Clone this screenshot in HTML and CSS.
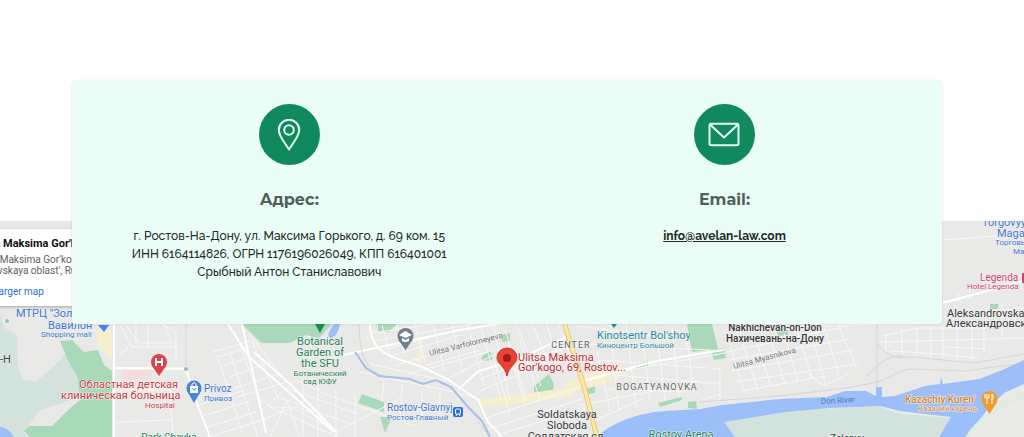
FILE: index.html
```
<!DOCTYPE html>
<html lang="ru">
<head>
<meta charset="utf-8">
<meta name="viewport" content="width=device-width, initial-scale=1">
<title>Контакты</title>
<link rel="stylesheet" href="styles.css">
</head>
<body>
<main class="page">
  <section class="contacts">
    <article class="contact">
      <span class="badge">
        <svg class="icon" viewBox="0 0 32 32" aria-hidden="true"><path d="M16 30.500C12.500 24.500 5.800 17.500 5.800 11A10.200 10.200 0 0 1 26.200 11C26.200 17.500 19.500 24.500 16 30.500Z"/><circle cx="16" cy="11" r="4.800"/></svg>
      </span>
      <h2 class="title">Адрес:</h2>
      <p class="text">г. Ростов-На-Дону, ул. Максима Горького, д. 69 ком. 15<br>ИНН 6164114826, ОГРН 1176196026049, КПП 616401001<br>Срыбный Антон Станиславович</p>
    </article>
    <article class="contact">
      <span class="badge">
        <svg class="icon" viewBox="0 0 32 32" aria-hidden="true"><rect x="1.500" y="4.800" width="29" height="21.500" rx="2"/><path d="M2 5.500L16 18.500L30 5.500"/></svg>
      </span>
      <h2 class="title">Email:</h2>
      <p class="text"><a class="mail" href="mailto:info@avelan-law.com">info@avelan-law.com</a></p>
    </article>
  </section>

  <section class="map" aria-label="Карта">
    <svg class="canvas" viewBox="0 221 1024 216" preserveAspectRatio="xMidYMin slice">
      <rect class="land" y="221" width="1024" height="216"/>

      <g class="marsh">
        <path d="M0 314L5 328L17 336L18 366L23 380L35 382L48 372L62 358L70 347L82 380L80 397L40 410L24 432L28 437H0Z"/>
        <path d="M722 421L790 411L878 406L900 414L951 418L938 437H735Z"/>
        <path d="M1024 398C1000 408 975 420 967 437H1024Z" fill="#e9e9e8"/>
      </g>
      <g class="park">
        <path d="M60 341L72 340L84 352L98 350L104 365L112 371V437H30L24 431L29 426L52 426L68 410L80 400L78 378L68 360Z"/>
        <path d="M242 324H332L319 338L306 335L290 343L261 343Z"/>
        <path d="M362 394L384 402V412L358 403ZM380 417L392 417L385 433ZM378 324H397L389 332H378ZM482 356L492 350L494 359L482 361Z"/>
        <path d="M534 386L549 374L554 384L552 395L541 398L534 393ZM585 386L595 384V393L586 394ZM636 365L648 361V366L636 368ZM658 403L682 397V400L660 407ZM688 402L696 401L697 409L688 408Z"/>
        <path d="M687 324H712L718 349L692 352ZM711 351L724 348L726 358L714 360ZM777 332L788 330V335L778 336ZM992 304H998V309H990V304Z"/>
        <path d="M486 354L492 351V360L482 361ZM501 335L510 333V341L502 342Z"/>
      </g>
      <g class="sand">
        <path d="M96 330H112V358L98 347ZM366 334L369 333V342H366ZM564 384L610 365L633 370L600 385L566 394ZM479 400L552 390L575 386L570 397L480 408ZM418 337H422V362H414V358H418Z"/>
      </g>
      <path d="M122 370H152V380H122Z" class="medical"/>

      <g class="minor">
        <path d="M119 324L132 347H176V360M125 324L139 343H172L164 324M136 324V344M148 324V348M118 358L128 347M114 368H186M116 422L171 420M116 390H170L173 437M161 324L176 332V355"/>
        <path d="M213 352L254 340L287 383M218 357L257 345M222 366L262 354M229 377L271 362M234 388L279 374M238 397L287 382M199 405L245 390M203 416L250 401M205 428L256 412M209 437L266 419M217 355L242 432M229 350L258 437M240 346L262 405M252 342L279 400"/>
        <path d="M260 412L296 380L330 396L418 427M270 437L287 401L300 437M250 424L292 408L337 431L404 397M256 397L272 407L300 408L325 420M303 378V437M318 384V437M336 390V437M355 394V437M286 388L358 414M278 397L350 424M268 406L338 437M359 372L458 393L481 400M370 364L447 381M384 379L382 402M402 384L400 420M422 389V416M440 392V414"/>
        <path d="M374 341L480 323M382 350L470 327M388 357L460 335M396 365L500 335M408 374L506 347M425 366L480 350M447 379L505 349M372 333L432 324M382 325L392 362M397 325L405 356M415 324L425 362M433 324L445 372M452 324L463 374M468 324L484 386M480 324L501 400M493 324L510 400M505 329L526 400"/>
        <path d="M480 379L562 348M480 391L555 359M480 420L582 386M488 429L582 399M500 434L589 407M516 324L541 386M532 324L552 370M546 324L560 363M558 324L570 355M508 347L525 405M520 341L541 402M490 348L510 413M510 370L590 339"/>
        <path d="M576 326L688 340M588 344L710 350M599 360L708 368M603 374L701 382M607 389L687 392M580 405L664 389M592 422L644 398M610 324L619 411M626 324L636 407M641 326L650 400M656 327L665 400M672 328L679 396M687 340L694 393M597 351L610 411M600 375L725 353"/>
        <path d="M727 352L848 326M729 360L850 339M731 371L854 350M734 382L858 364M741 391L826 376M730 347L745 393M743 344L758 390M756 340L771 387M770 337L785 384M784 334L798 381M797 331L812 378M810 328L826 386M824 326L839 374M838 324L856 367M806 372L824 386L848 374M790 327L880 324M712 369H720V402M702 383H720M702 400L720 394"/>
        <path d="M943 240L1024 234M943 302L1024 281M943 317L1024 308M880 342L956 340L1024 338M883 336L918 328H990M890 351L940 354L979 358M902 329V355M917 328V356M931 327V358M943 327V358M957 327V359M972 325V359M984 326V352M1002 304V337M958 292V302M970 290V300M946 347L986 349M886 334V352"/>
      </g>
      <g class="major">
        <path d="M114 324V437M114 368L186 369L196 401L210 437M228 324L249 357L334 432M242 324L266 433M254 352L290 384L337 433M343 355L460 330L510 322M370 324C370 355 395 358 420 366L447 379L462 389L478 400L488 422L502 437M458 390L477 372L525 356L566 337M580 382L652 362L704 353L724 350M943 303L1024 281M967 437C978 418 998 407 1024 395"/>
      </g>
      <g class="rail">
        <path d="M700 402L780 396L846 388L878 382C894 376 900 369 913 369L965 371L1024 363M878 344C888 358 896 358 912 357L974 363L1024 354M877 324V404M866 376C880 365 884 355 902 356M186 324V366M359 324C360 355 364 367 385 378M478 422L490 437"/>
      </g>
      <g class="highway">
        <path d="M565 324C570 345 581 373 586 394L597 437"/>
        <path class="highway-fill" d="M565 324C570 345 581 373 586 394L597 437"/>
      </g>

      <g class="water">
        <path d="M0 427Q8 427 14 437H0ZM334 324H340Q338 336 331 338Q326 337 330 330Z"/>
        <path d="M597 437C611 423 637 413 665 411L700 409L722 405L780 399L827 397L845 391L866 391L876 396V387H882V397L895 396L925 386L940 384L941 377L943 384L979 379L1000 371L1024 360V384L1004 393L989 408L975 425L966 437H939L951 417L900 411L880 406L830 408L785 412L724 422L735 437Z"/>
        <path class="stream" d="M355 352L366 368L379 376L410 379L423 384L436 380L451 387L468 407L482 421L490 437"/>
      </g>
      <path class="green-line" d="M967 437C978 418 998 407 1024 395"/>

      <g class="label">
        <g class="blue">
          <text x="16" y="317" class="big">МТРЦ "Золотой</text>
          <text x="48" y="329" class="big">Вавилон"</text>
          <text x="41" y="337" class="small">Shopping mall</text>
          <text x="204" y="392">Privoz</text>
          <text x="204" y="401" class="small">Привоз</text>
          <text x="387" y="411">Rostov-Glavnyj</text>
          <text x="387" y="420" class="small">Ростов-Главный</text>
          <text x="982" y="226" class="big">Torgovyy</text>
          <text x="997" y="237" class="big">Magazin</text>
          <text x="995" y="245" class="small">Торговый</text>
          <text x="1013" y="254" class="small">Магазин</text>
        </g>
        <g class="red">
          <text x="79" y="388" class="big">Областная детская</text>
          <text x="61" y="399" class="big">клиническая больница</text>
          <text x="145" y="408" class="small">Hospital</text>
        </g>
        <g class="crimson big">
          <text x="518" y="361">Ulitsa Maksima</text>
          <text x="518" y="371">Gor'kogo, 69, Rostov...</text>
        </g>
        <g class="green center">
          <text x="320" y="345" class="big">Botanical</text>
          <text x="320" y="356" class="big">Garden of</text>
          <text x="320" y="367" class="big">the SFU</text>
          <text x="320" y="376" class="small">Ботанический</text>
          <text x="320" y="384" class="small">сад ЮФУ</text>
          <text x="169" y="441">Park Chayka</text>
          <text x="681" y="438" class="big">Rostov Arena</text>
        </g>
        <g class="teal">
          <text x="597" y="339" class="big">Kinotsentr Bol'shoy</text>
          <text x="597" y="348" class="small">Киноцентр Большой</text>
        </g>
        <g class="pink">
          <text x="980" y="281">Legenda</text>
          <text x="967" y="289" class="small">Hotel Legenda</text>
        </g>
        <g class="orange">
          <text x="905" y="403" class="strong">Kazachiy Kuren'</text>
          <text x="918" y="411" class="small">Казачий курень</text>
        </g>
        <g class="dark">
          <text x="0" y="363" class="big">-Н</text>
          <text x="775" y="331" class="center strong">Nakhichevan-on-Don</text>
          <text x="775" y="342" class="center strong">Нахичевань-на-Дону</text>
          <text x="947" y="317" class="big">Aleksandrovskaya</text>
          <text x="946" y="327" class="big">Александровская</text>
          <text x="567" y="418" class="center big">Soldatskaya</text>
          <text x="567" y="429" class="center big">Sloboda</text>
          <text x="567" y="440" class="center big">Солдатская сл.</text>
          <text x="847" y="442" class="center">Zelenyy</text>
        </g>
        <g class="district">
          <text x="571" y="348">CENTER</text>
          <text x="657" y="390">BOGATYANOVKA</text>
        </g>
        <g class="street">
          <text transform="translate(430 356) rotate(-14)">Ulitsa Varfolomeyeva</text>
          <text transform="translate(734 369) rotate(-15)">Ulitsa Myasnikova</text>
          <text transform="translate(821 404) rotate(-3)" class="river">Don River</text>
        </g>
      </g>

      <g class="pins">
        <path d="M98 325H109L104 332Z" fill="#4285f4"/>
        <path d="M315 324H325L320 333Z" fill="#1e8e4e"/>
        <path d="M611 324H617L614 328Z" fill="#238ba6"/>
        <g fill="#dc444c"><circle cx="159" cy="362" r="8"/><path d="M152 366L159 376L166 366Z"/></g>
        <path d="M156 358V366M162 358V366M156 362H162" stroke="#fff" stroke-width="2"/>
        <g fill="#4b83d9"><circle cx="194" cy="388" r="7.500"/><path d="M187 391L194 403L201 391Z"/></g>
        <path d="M190 386H198V393H190Z" fill="#fff"/><path d="M192 386V384Q194 381 196 384V386" fill="none" stroke="#fff"/><path d="M192 388Q194 392 196 388" fill="none" stroke="#4b83d9"/>
        <g fill="#71808e"><circle cx="405.500" cy="336" r="8"/><path d="M398.500 340L405.500 350L412.500 340Z"/></g>
        <path d="M399 335L405.500 331L412 335L405.500 338ZM402 338V341Q405.500 343 409 341V338L405.500 340Z" fill="#fff"/>
        <path d="M507 376C505 366 497 364 497 357.500A10 9.500 0 0 1 517 357.500C517 364 509 366 507 376Z" fill="#ea4335" stroke="#c5372c"/><circle cx="507" cy="358" r="4" fill="#9e1c15"/>
        <rect x="453" y="407" width="10" height="10" rx="2" fill="#2e6fd6"/><rect x="455.500" y="409" width="5" height="5" rx="1" fill="none" stroke="#fff"/><path d="M456 416L457 414M460 416L459 414" stroke="#fff"/>
        <g fill="#f29a2e"><circle cx="989.500" cy="399" r="8"/><path d="M982.500 403L989.500 414L996.500 403Z"/></g>
        <path d="M987 394V404M985 394V398H989V394M992 404V394Q995 396 992 400" fill="none" stroke="#fff"/>
        <path d="M1023 273V283" stroke="#d23f78" stroke-width="2"/>
        <circle cx="186" cy="369" r="2" fill="#9dbcae"/>
        <circle cx="7" cy="321" r="2" fill="#8fcab0"/>
      </g>
    </svg>
    <div class="place">
      <strong class="place-name">Ulitsa Maksima Gor'kogo, 69</strong>
      <span class="place-address">Ulitsa Maksima Gor'kogo, 69,<br>Rostovskaya oblast', Russia</span>
      <a class="place-link" href="#map">View larger map</a>
    </div>
  </section>
</main>
</body>
</html>
```
FILE: styles.css
```
* { box-sizing: border-box; }

body {
  margin: 0;
  background: #fff;
  font-family: "Raleway", "Lato", sans-serif;
  color: #222b28;
}

.page {
  display: flex;
  flex-direction: column;
  min-height: 100vh;
  padding-top: 81px;
  overflow: hidden;
}

.contacts {
  position: relative;
  z-index: 1;
  display: grid;
  grid-template-columns: 1fr 1fr;
  min-height: 243px;
  margin: 0 8% 0 7%;
  padding-top: 23px;
  background: #ebfdf7;
  border-radius: 4px;
  box-shadow: 0 0 3px rgba(0, 60, 40, 0.12);
}

.contact {
  display: flex;
  flex-direction: column;
  align-items: center;
  text-align: center;
}

.badge {
  display: grid;
  place-items: center;
  width: 61px;
  height: 61px;
  border-radius: 50%;
  background: #11895f;
}

.icon {
  width: 32px;
  height: 32px;
  fill: none;
  stroke: #e5fff5;
  stroke-width: 2;
  stroke-linejoin: round;
}

.title {
  margin: 25px 0 17px;
  font-family: "Montserrat", "Open Sans", sans-serif;
  font-size: 16px;
  line-height: 20px;
  font-weight: 700;
  color: #4c615a;
}

.text {
  margin: 0;
  font-size: 12px;
  line-height: 18px;
  font-weight: 500;
}

.mail {
  font-weight: 700;
  color: inherit;
}

.map {
  position: relative;
  flex: 1;
  display: flex;
  min-height: 216px;
  margin-top: -103px;
  overflow: hidden;
  font-family: Roboto, sans-serif;
}

.canvas { flex: 1; width: 100%; min-height: 216px; }

.land { fill: #e9e9e8; }
.marsh { fill: #d3e2dc; }
.park { fill: #a9d9b9; }
.sand { fill: #f6efcf; }
.medical { fill: #f3dede; }

.minor, .major, .rail, .highway { fill: none; stroke-linejoin: round; }
.minor { stroke: #f8f8f8; stroke-width: 1; }
.major { stroke: #fff; stroke-width: 2; }
.rail { stroke: #d4d5d6; stroke-width: 1; }
.highway { stroke: #efc66e; stroke-width: 5; }
.highway-fill { stroke: #fce9a8; stroke-width: 3; }

.water { fill: #9cbffa; }
.stream { fill: none; stroke: #a5c0ea; stroke-width: 2; }
.green-line { fill: none; stroke: #d8eee0; stroke-width: 3; }

.label {
  font-size: 10px;
  paint-order: stroke;
  stroke: #f3f4f3;
  stroke-width: 1px;
  stroke-linejoin: round;
}

.small { font-size: 8px; }
.big { font-size: 11px; }
.strong { font-weight: 500; }
.center { text-anchor: middle; }

.blue { fill: #3c78cc; }
.red { fill: #c93c46; }
.crimson { fill: #b92d36; }
.green { fill: #27805a; }
.teal { fill: #278ba5; }
.pink { fill: #cf3f78; }
.orange { fill: #d8852b; }
.dark { fill: #363739; }
.district { fill: #626468; font-size: 9px; letter-spacing: 1px; text-anchor: middle; }
.street { fill: #707276; font-size: 8px; }
.river { fill: #4d7cc0; stroke: none; }

.place {
  position: absolute;
  top: 8px;
  left: -36px;
  display: flex;
  flex-direction: column;
  align-items: flex-start;
  width: 240px;
  padding: 8px;
  background: #fff;
  box-shadow: 0 1px 3px rgba(0, 0, 0, 0.3);
  font-size: 10px;
  line-height: 11px;
}

.place-name { font-size: 11px; line-height: 14px; font-weight: 700; color: #111; }
.place-address { margin-top: 3px; color: #5d6165; }
.place-link { margin-top: 10px; line-height: 12px; color: #2a6fc9; text-decoration: none; }
```
